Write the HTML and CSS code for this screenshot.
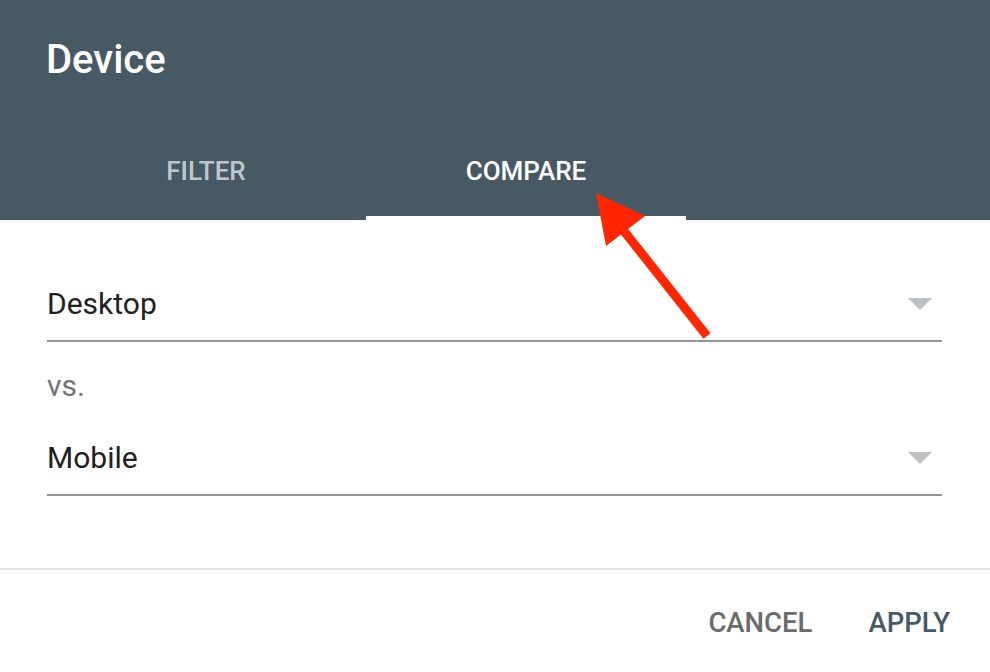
FILE: index.html
```html
<!DOCTYPE html>
<html lang="en">
<head>
<meta charset="utf-8">
<title>Device</title>
<link rel="stylesheet" href="styles.css">
</head>
<body>
<div class="dialog">
  <header class="head">
    <h1 class="title">Device</h1>
    <nav class="tabs">
      <div class="tab">FILTER</div>
      <div class="tab active">COMPARE</div>
    </nav>
  </header>
  <main class="body">
    <div class="field">
      <span class="value">Desktop</span>
      <span class="caret"></span>
    </div>
    <div class="vs">vs.</div>
    <div class="field second">
      <span class="value">Mobile</span>
      <span class="caret"></span>
    </div>
  </main>
  <footer class="actions">
    <button class="btn cancel">CANCEL</button>
    <button class="btn apply">APPLY</button>
  </footer>
  <svg class="annotation" width="990" height="672" viewBox="0 0 990 672">
    <line x1="620" y1="226" x2="707" y2="336" stroke="#ff2600" stroke-width="9"/>
    <polygon points="596,193 606,246 645,216" fill="#ff2600"/>
  </svg>
</div>
</body>
</html>
```

FILE: styles.css
```css
html, body {
  margin: 0;
  padding: 0;
  background: #ffffff;
}
body {
  font-family: Roboto, "Liberation Sans", Arial, sans-serif;
  width: 990px;
  height: 672px;
  overflow: hidden;
}
.dialog {
  position: relative;
  width: 990px;
  height: 672px;
  display: flex;
  flex-direction: column;
}
.head {
  background: #475965;
  height: 220px;
  display: flex;
  flex-direction: column;
  box-sizing: border-box;
  padding-top: 38px;
}
.title {
  margin: 0 0 0 46px;
  font-size: 40px;
  line-height: 44px;
  font-weight: 500;
  color: #ffffff;
}
.tabs {
  margin-top: auto;
  margin-left: 46px;
  display: flex;
}
.tab {
  width: 320px;
  height: 91px;
  border-bottom: 4px solid transparent;
  display: flex;
  align-items: center;
  justify-content: center;
  font-size: 26px;
  font-weight: 500;
  color: rgba(255, 255, 255, 0.68);
}
.tab.active {
  color: #ffffff;
  border-bottom-color: #ffffff;
}
.body {
  padding: 0 48px 0 47px;
  display: flex;
  flex-direction: column;
}
.field {
  margin-top: 66px;
  display: flex;
  align-items: center;
  justify-content: space-between;
  padding-bottom: 18px;
  border-bottom: 2px solid #949494;
}
.field.second {
  margin-top: 38px;
}
.value {
  font-size: 30px;
  line-height: 36px;
  color: #212121;
}
.caret {
  width: 0;
  height: 0;
  margin-right: 10px;
  border-left: 12px solid transparent;
  border-right: 12px solid transparent;
  border-top: 12px solid #bcc0c2;
}
.vs {
  margin-top: 28px;
  font-size: 30px;
  line-height: 32px;
  color: #757575;
}
.actions {
  margin-top: 72px;
  border-top: 2px solid #e3e3e3;
  display: flex;
  justify-content: flex-end;
  padding: 26px 40px 0 0;
  gap: 56px;
}
.btn {
  background: none;
  border: 0;
  padding: 0;
  height: 52px;
  font-family: inherit;
  font-size: 27.5px;
  font-weight: 500;
}
.cancel {
  color: #6b6b6b;
}
.apply {
  color: #475965;
}
.annotation {
  position: absolute;
  left: 0;
  top: 0;
  pointer-events: none;
}
```
